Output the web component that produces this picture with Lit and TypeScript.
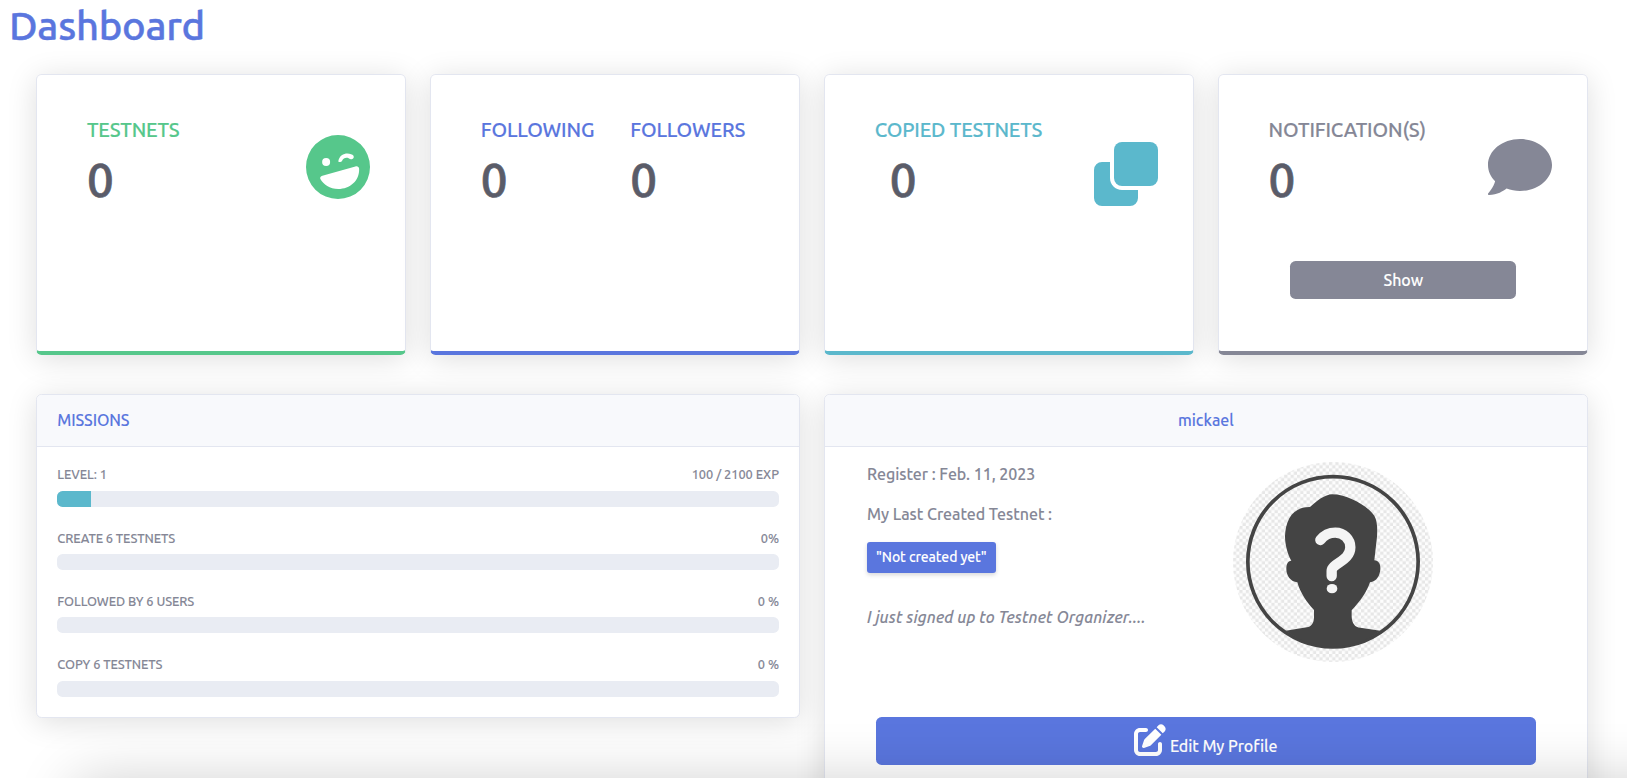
import { LitElement, html, css, svg } from "lit";
import { customElement } from "lit/decorators.js";

const ICONS = {
  laugh: svg`<path fill-rule="evenodd" d="M256 0a256 256 0 1 0 0 512a256 256 0 1 0 0-512zM161 184a32 32 0 1 1 0 64a32 32 0 1 1 0-64zM259 207C266 166 300 147 331 147C353 147 371 154 380 166C386 180 379 191 366 193C357 194 351 190 341 185C320 178 298 184 288 207C281 219 258 220 259 207zM131 325L395 252C411 247 424 255 425 270C429 365 353 432 258 432C190 432 139 393 115 352C109 340 118 329 131 325z"/>`,
  clone: svg`<rect x="160" y="0" width="352" height="352" rx="64"/><path d="M128 160H64a64 64 0 0 0-64 64v224a64 64 0 0 0 64 64h224a64 64 0 0 0 64-64v-64H224c-53 0-96-43-96-96z"/>`,
  comment: svg`<path d="M256 32C114.600 32 0 125.100 0 240c0 49.600 21.400 95 57 130.700C44.500 421.100 2.700 466 2.200 466.500c-2.200 2.300-2.800 5.700-1.500 8.700S4.800 480 8 480c66.300 0 116-31.800 140.600-51.400 32.700 12.300 69 19.400 107.400 19.400 141.400 0 256-93.100 256-208S397.400 32 256 32z"/>`,
  edit: svg`<path d="M471.600 21.700c-21.900-21.900-57.300-21.900-79.200 0L362.300 51.700l97.900 97.900 30.100-30.100c21.900-21.900 21.900-57.300 0-79.200L471.600 21.700zm-299.200 220c-6.100 6.100-10.800 13.600-13.500 21.900l-29.600 88.800c-2.900 8.600-.6 18.100 5.800 24.600s15.900 8.700 24.600 5.800l88.800-29.600c8.200-2.700 15.700-7.400 21.900-13.500L437.700 172.300 339.700 74.300 172.400 241.700zM96 64C43 64 0 107 0 160V416c0 53 43 96 96 96H352c53 0 96-43 96-96V320c0-17.700-14.300-32-32-32s-32 14.300-32 32v96c0 17.700-14.300 32-32 32H96c-17.700 0-32-14.300-32-32V160c0-17.700 14.300-32 32-32h96c17.700 0 32-14.300 32-32s-14.300-32-32-32H96z"/>`,
};

const MISSIONS = [
  { label: "LEVEL: 1", value: "100 / 2100 EXP", pct: 4.7 },
  { label: "CREATE 6 TESTNETS", value: "0%", pct: 0 },
  { label: "FOLLOWED BY 6 USERS", value: "0 %", pct: 0 },
  { label: "COPY 6 TESTNETS", value: "0 %", pct: 0 },
];

@customElement("app-root")
export class AppRoot extends LitElement {
  static styles = css`
    :host { display: block; position: relative; height: 778px; overflow: hidden; background: #fff; color: #858796;
      font: 500 16px/24px Ubuntu, "Noto Sans", sans-serif; letter-spacing: -.04px; -webkit-text-stroke: .08px currentColor; }
    * { box-sizing: border-box; }
    h1 { margin: 0; padding: 2px 0 0 9px; height: 74px; font-size: 40px; line-height: 48px; font-weight: 500; color: #5a76de; letter-spacing: -.28px; -webkit-text-stroke: .4px currentColor; }
    p { margin: 0; }
    .grid { display: grid; grid-template-columns: repeat(4, 1fr); column-gap: 24px; row-gap: 39px; padding: 0 39.3px 0 36.3px; align-items: start; }
    .card { background: #fff; border: 1px solid #e3e6f0; border-radius: 5.600px; box-shadow: 0 4px 30px rgba(0,0,0,.135); }
    .stat { height: 281px; border-bottom: 4px solid currentColor; padding: 43px 35px 0 49.700px; }
    .row { display: flex; justify-content: space-between; }
    .pair { display: flex; gap: 36px; }
    .lab { font-size: 20px; line-height: 24px; letter-spacing: -.14px; white-space: nowrap; -webkit-text-stroke: .15px currentColor; }
    .num { font-size: 47.500px; line-height: 58px; margin-top: 9px; color: #5a5c69; -webkit-text-stroke: .7px currentColor; }
    .indent { padding-left: 15px; }
    .green { color: #56c78b } .blue { color: #5a76de } .teal { color: #5bb8cc } .gray { color: #858796 }
    .big { width: 64px; height: 64px; fill: currentColor; stroke: none; margin-top: 17px; display: block; }
    .teal .big { margin-top: 24px; }
    .btn { display: flex; justify-content: center; color: #fff; border-radius: 5.600px; }
    .show { background: #858796; width: 226px; height: 38px; padding-top: 7px; margin: 52px 0 0 21.800px; }
    .wide { grid-column: span 2; }
    .head { height: 52px; padding: 13px 20px 0; background: #f8f9fc; border-bottom: 1px solid #e3e6f0; color: #5a76de; border-radius: 5px 5px 0 0; letter-spacing: -.12px; }
    .center { text-align: center; letter-spacing: 0; }
    .missions { height: 324px; }
    .mbody { padding: 19px 20px 0; }
    .m { height: 63.200px; }
    .mh { display: flex; justify-content: space-between; font-size: 12.800px; line-height: 15px; height: 25px; padding-top: 1.600px; letter-spacing: -.09px; }
    .m:first-child .mh { padding-top: .8px; }
    .mh span:last-child { letter-spacing: -.04px; }
    .bar { height: 16px; border-radius: 5.600px; background: #e9ecf3; overflow: hidden; }
    .fill { height: 100%; background: #5bb8cc; }
    .profile { height: 460px; }
    .pbody { display: flex; padding: 15px 0 0 42px; height: 270px; }
    .info { width: 366px; display: flex; flex-direction: column; align-items: flex-start; gap: 16px; }
    .badge { background: #5a76de; color: #fff; font-size: 14px; line-height: 21px; height: 31px; padding: 5px 9px; letter-spacing: -.1px; border-radius: 3px; box-shadow: 0 2px 4px rgba(58,59,69,.2); white-space: nowrap; }
    .bio { font-style: italic; margin-top: 16px; letter-spacing: .1px; white-space: nowrap; }
    .avatar { width: 200px; height: 200px; flex: none; }
    .edit { background: #5a76de; height: 48px; margin: 0 50.500px; padding-top: 7px; gap: 3.500px; line-height: 45px; letter-spacing: -.08px; }
    .edit svg { width: 32px; height: 32px; fill: #fff; stroke: none; }
    .next { position: absolute; top: 782px; left: 75px; right: -100px; height: 80px; box-shadow: 0 0 60px rgba(0,0,0,.2); }
  `;

  private avatar() {
    return html`<svg class="avatar" viewBox="0 0 200 200">
      <defs><pattern id="check" width="6.4" height="6.4" patternUnits="userSpaceOnUse"><rect width="6.4" height="6.4" fill="#fdfdfd"/><path d="M0 0h3.200v3.200h-3.200zM3.200 3.200h3.200v3.200h-3.200z" fill="#e7e7e7"/></pattern></defs>
      <circle cx="100" cy="100" r="100" fill="url(#check)"/>
      <g transform="scale(.33333) translate(-24 -21)">
        <circle cx="324" cy="320.500" r="255.500" fill="none" stroke="#444" stroke-width="11"/>
        <path fill="#444" d="M322 118C365 118 425 150 448 182C458 200 457 225 456 245L448 316C462 318 467 328 466 343C465 362 455 380 435 382C425 412 405 440 380 466V485C381 505 390 517 406 518L466 527A235 235 0 0 1 182 527L250 516C262 513 267 500 267 487V465C245 442 225 412 217 382C197 380 184 362 184 342C184 328 188 318 199 317C188 298 180 270 180 243C182 195 203 155 255 156C275 138 300 118 322 118Z"/>
        <path fill="none" stroke="#f4f4f4" stroke-width="31" stroke-linecap="round" d="M286 255C298 240 312 233 331 233C356 233 376 252 376 277C376 318 320 325 320 348V363"/>
        <ellipse cx="321" cy="401" rx="16" ry="14" fill="#f4f4f4"/>
      </g></svg>`;
  }

  render() {
    return html`<h1>Dashboard</h1>
      <div class="grid">
        <div class="card stat green"><div class="row"><div><div class="lab">TESTNETS</div><div class="num">0</div></div><svg class="big" viewBox="0 0 512 512">${ICONS.laugh}</svg></div></div>
        <div class="card stat blue"><div class="pair"><div><div class="lab">FOLLOWING</div><div class="num">0</div></div><div><div class="lab">FOLLOWERS</div><div class="num">0</div></div></div></div>
        <div class="card stat teal"><div class="row"><div><div class="lab">COPIED TESTNETS</div><div class="num indent">0</div></div><svg class="big" viewBox="0 0 512 512">${ICONS.clone}</svg></div></div>
        <div class="card stat gray"><div class="row"><div><div class="lab">NOTIFICATION(S)</div><div class="num">0</div></div><svg class="big" viewBox="0 0 512 512">${ICONS.comment}</svg></div><div class="btn show">Show</div></div>
        <div class="card wide missions"><div class="head">MISSIONS</div><div class="mbody">${MISSIONS.map(m => html`<div class="m"><div class="mh"><span>${m.label}</span><span>${m.value}</span></div><div class="bar"><div class="fill" style="width:${m.pct}%"></div></div></div>`)}</div></div>
        <div class="card wide profile">
          <div class="head center">mickael</div>
          <div class="pbody">
            <div class="info"><p>Register : Feb. 11, 2023</p><p>My Last Created Testnet :</p><span class="badge">"Not created yet"</span><p class="bio">I just signed up to Testnet Organizer....</p></div>
            ${this.avatar()}
          </div>
          <div class="btn edit"><svg viewBox="0 0 512 512">${ICONS.edit}</svg><span>Edit My Profile</span></div>
        </div>
      </div>
      <div class="next"></div>`;
  }
}
